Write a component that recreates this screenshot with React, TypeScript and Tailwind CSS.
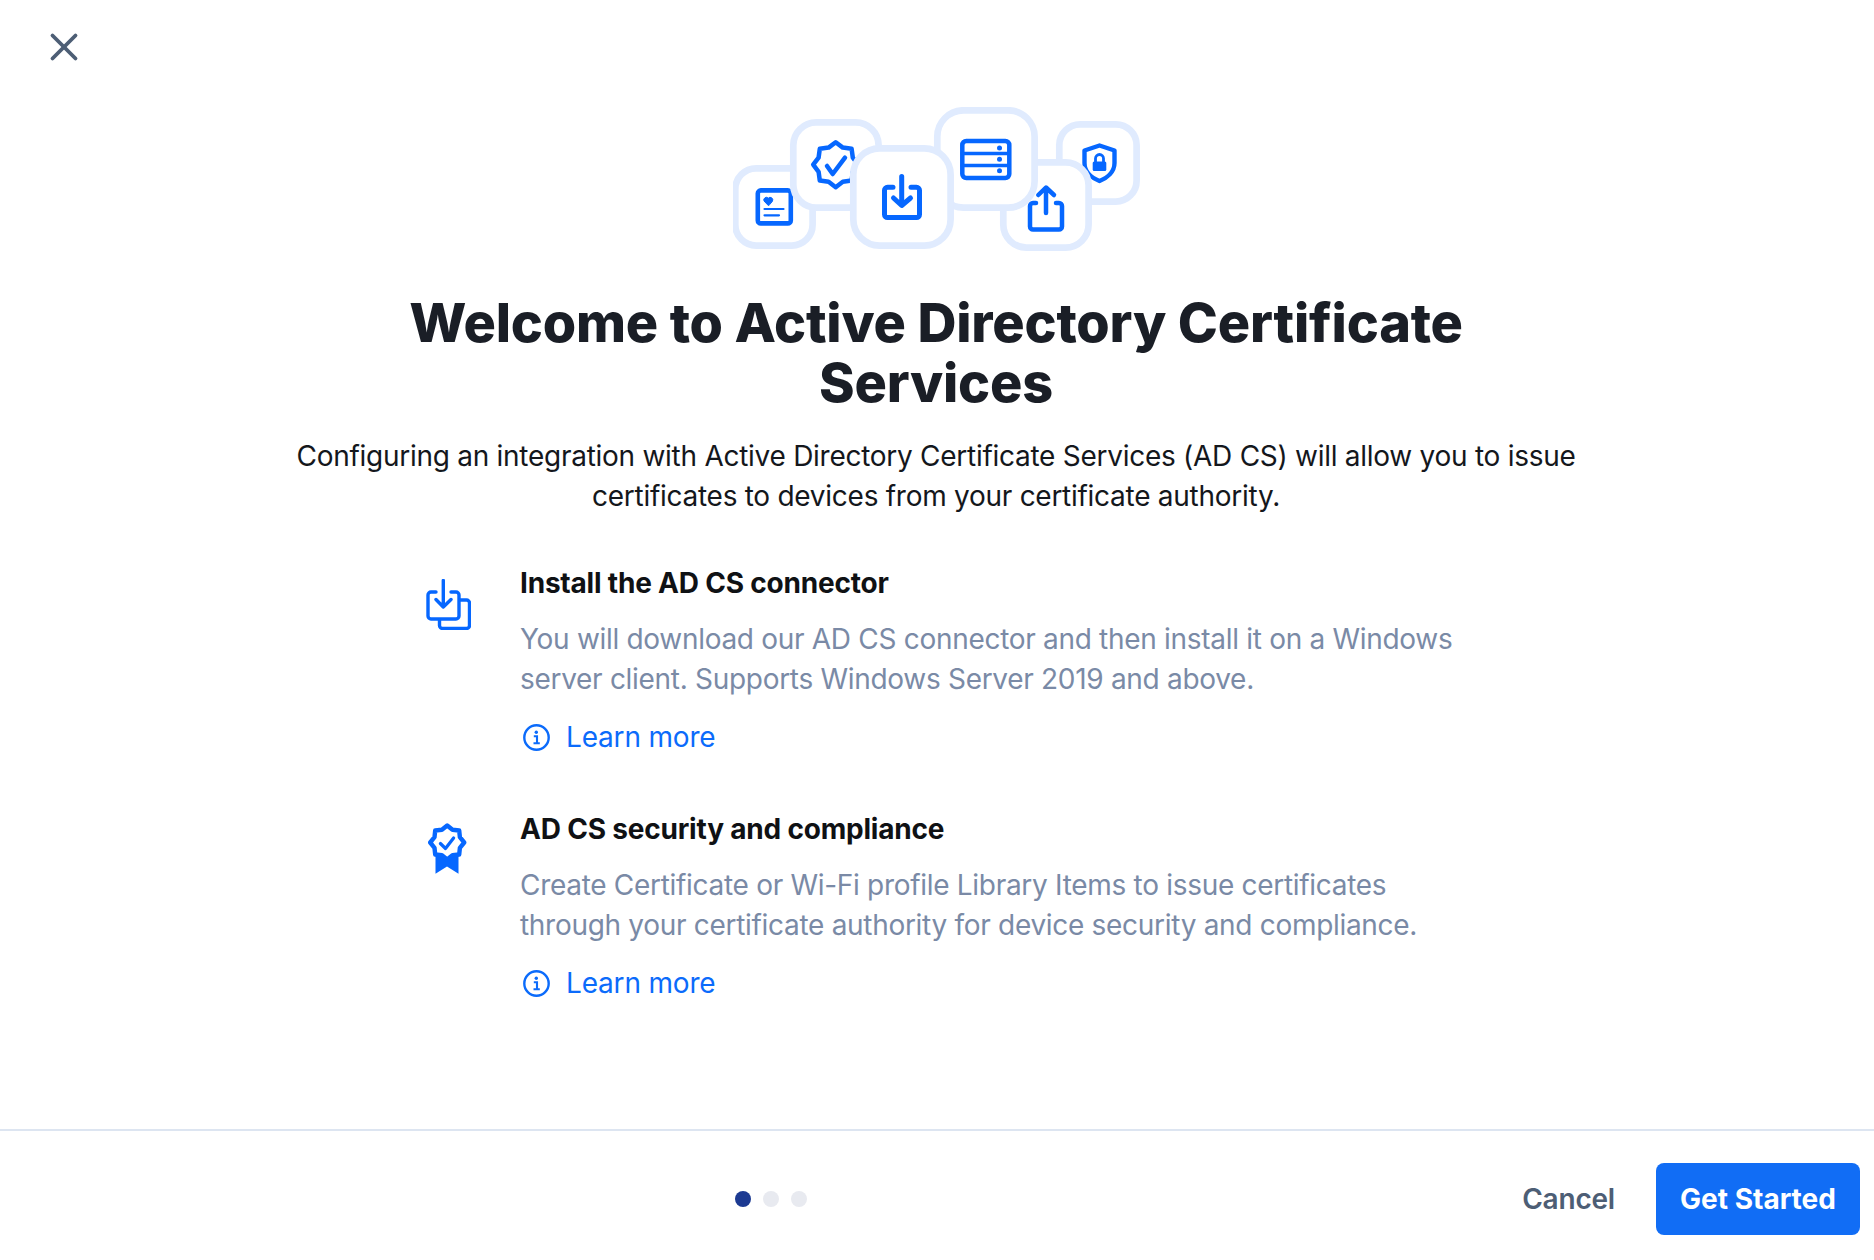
import { X } from "lucide-react"

const BLUE = "#0667ff"

// wavy seal outline used by both badge icons
function seal(cx: number, cy: number, outer: number, inner: number, n: number) {
  const pts: string[] = []
  for (let i = 0; i < n * 2; i++) {
    const r = i % 2 === 0 ? outer : inner
    const a = (Math.PI * i) / n - Math.PI / 2
    pts.push(`${(cx + r * Math.cos(a)).toFixed(1)},${(cy + r * Math.sin(a)).toFixed(1)}`)
  }
  return pts.join(" ")
}

function Tile({ x, y, size }: { x: number; y: number; size: number }) {
  return (
    <rect x={x} y={y} width={size} height={size} rx={size * 0.27} fill="#fff" stroke="#e0ebfe" strokeWidth="6.7" />
  )
}

function HeroIcons() {
  return (
    <svg width="408" height="144" viewBox="33 17 408 144" fill="none" stroke={BLUE} strokeLinecap="round" strokeLinejoin="round">
      <Tile x={359.3} y={34.3} size={77.3} />
      <path d="M399.5 55.5 414.5 60.5V73C414.5 82 407 88 399.5 91 392 88 384.5 82 384.5 73V60.5Z" strokeWidth="4.4" />
      <rect x="392.7" y="71.5" width="13.6" height="9.5" rx="1.5" fill={BLUE} stroke="none" />
      <path d="M395.5 72V68.5a4 4 0 0 1 8 0V72" strokeWidth="2.8" />

      <Tile x={303.3} y={72.3} size={85.3} />
      <path d="M336 113H333a3 3 0 0 0-3 3V136.5a3 3 0 0 0 3 3H359a3 3 0 0 0 3-3V116a3 3 0 0 0-3-3H356" strokeWidth="4.5" />
      <path d="M346 123V98M338.3 105 346 97.5 354 105" strokeWidth="4.5" />

      <Tile x={237.3} y={20.3} size={97.3} />
      <rect x="262.3" y="51" width="47" height="37" rx="4" strokeWidth="4.5" />
      <path d="M262.3 63.5H309.3M262.3 75.5H309.3" strokeWidth="3.6" />
      <g fill={BLUE} stroke="none">
        <circle cx="299.5" cy="58" r="2.5" />
        <circle cx="299.5" cy="69.3" r="2.5" />
        <circle cx="299.5" cy="80.7" r="2.5" />
      </g>

      <Tile x={35.3} y={78.3} size={77.3} />
      <rect x="57.8" y="100.4" width="33" height="33" rx="3" strokeWidth="4.6" />
      <path d="M68.3 115.5 64 111a2.6 2.6 0 0 1 4.3-2.8A2.6 2.6 0 0 1 72.6 111Z" fill={BLUE} strokeWidth="1" />
      <path d="M64.5 119H83.5M64.5 125.3H79" strokeWidth="2.2" />

      <Tile x={93.3} y={32.3} size={85.3} />
      <polygon points={seal(135.7, 74.7, 22.5, 18.5, 8)} strokeWidth="4.5" />
      <path d="M127 76 132.7 84 145 67.7" strokeWidth="4.5" />

      <Tile x={153.3} y={58.3} size={97.3} />
      <path d="M193 97.3H187.5a3 3 0 0 0-3 3V124.5a3 3 0 0 0 3 3H216.5a3 3 0 0 0 3-3V100.3a3 3 0 0 0-3-3H211" strokeWidth="5" />
      <path d="M201.7 86.5V115M193.5 108 201.7 115.5 210.5 108" strokeWidth="5" />
    </svg>
  )
}

function DownloadIcon() {
  return (
    <svg width="45" height="51" viewBox="0 0 45 51" fill="none" stroke={BLUE} strokeWidth="3.4" strokeLinecap="round" strokeLinejoin="round">
      <path d="M10 13H5a3 3 0 0 0-3 3V37a3 3 0 0 0 3 3H30a3 3 0 0 0 3-3V16a3 3 0 0 0-3-3H25" />
      <path d="M17.3 1.5V28M10 20.5 17.3 28 25 20.5" />
      <path d="M34 21H40.5a3 3 0 0 1 3 3V46.5a3 3 0 0 1-3 3H16.5a3 3 0 0 1-3-3V41" />
    </svg>
  )
}

function RibbonIcon() {
  return (
    <svg width="39" height="51" viewBox="0 0 39 51" fill="none" stroke={BLUE} strokeLinecap="round" strokeLinejoin="round">
      <path d="M7.5 30 19 37 30.5 30V50.7L19 43.5 7.5 50.7Z" fill={BLUE} stroke="none" />
      <polygon points={seal(19.2, 19.5, 17, 13.8, 8)} fill="#fff" strokeWidth="4.4" />
      <path d="M12.4 20.5 17.5 25.5 25.6 15" strokeWidth="3.2" />
    </svg>
  )
}

function InfoIcon() {
  return (
    <svg width="27" height="27" viewBox="0 0 27 27" fill="none" stroke="#0b6bfb">
      <circle cx="13.5" cy="13.5" r="12.2" strokeWidth="2.4" />
      <circle cx="13.3" cy="8.3" r="1.7" fill="#0b6bfb" stroke="none" />
      <path d="M10.8 12.3H14V19M10.5 19.2H16.8" strokeWidth="2.1" />
    </svg>
  )
}

function Feature({ icon, title, lines, iconClass }: { icon: React.ReactNode; title: string; lines: string[]; iconClass: string }) {
  return (
    <div className="flex">
      <div className={iconClass}>{icon}</div>
      <div>
        <h2 className="text-[28px] leading-[40px] font-bold text-[#0f1114] tracking-[-0.2px]">{title}</h2>
        <p className="mt-[16px] whitespace-nowrap text-[28px] leading-[40px] text-[#7a8aa6] tracking-[-0.3px]">
          {lines[0]}
          <br />
          {lines[1]}
        </p>
        <a className="mt-[18px] flex items-center gap-[16px] pl-[3px] text-[28px] leading-[40px] text-[#0b6bfb] tracking-[-0.18px]">
          <InfoIcon />
          Learn more
        </a>
      </div>
    </div>
  )
}

export default function App() {
  return (
    <div className="relative flex h-[1260px] w-[1874px] flex-col bg-white font-['Inter',sans-serif]">
      <button className="absolute left-[41px] top-[24px] text-[#4d5e75]">
        <X size={46} strokeWidth={2} />
      </button>

      <main className="flex h-[1129px] flex-col items-center pt-[107px]">
        <HeroIcons />
        <h1 className="mr-[2px] mt-[42px] text-center text-[54px] leading-[60px] font-extrabold text-[#1a1e26] tracking-[-0.2px]">
          Welcome to Active Directory Certificate
          <br />
          Services
        </h1>
        <p className="mr-[2px] mt-[23px] text-center text-[28px] leading-[40px] text-[#14171c] tracking-[-0.27px]">
          Configuring an integration with Active Directory Certificate Services (AD CS) will allow you to issue
          <br />
          certificates to devices from your certificate authority.
        </p>

        <div className="ml-[426px] mt-[47px] flex flex-col gap-[52px] self-start">
          <Feature
            icon={<DownloadIcon />}
            iconClass="mt-[16px] w-[94px] shrink-0"
            title="Install the AD CS connector"
            lines={[
              "You will download our AD CS connector and then install it on a Windows",
              "server client. Supports Windows Server 2019 and above.",
            ]}
          />
          <Feature
            icon={<RibbonIcon />}
            iconClass="mt-[14px] w-[94px] shrink-0 pl-[2px]"
            title="AD CS security and compliance"
            lines={[
              "Create Certificate or Wi-Fi profile Library Items to issue certificates",
              "through your certificate authority for device security and compliance.",
            ]}
          />
        </div>
      </main>

      <footer className="flex h-[131px] items-center border-t-2 border-[#dde5f1] pt-[7px]">
        <div className="ml-[735px] flex gap-[12px]">
          <span className="h-4 w-4 rounded-full bg-[#1c3a92]" />
          <span className="h-4 w-4 rounded-full bg-[#e8eaf0]" />
          <span className="h-4 w-4 rounded-full bg-[#e8eaf0]" />
        </div>
        <button className="ml-auto text-[28px] font-semibold text-[#4d5e75] tracking-[-0.2px]">Cancel</button>
        <button className="ml-[41px] mr-[14px] h-[72px] w-[204px] rounded-lg bg-[#116df5] text-[28px] font-bold text-white tracking-[0px]">
          Get Started
        </button>
      </footer>
    </div>
  )
}
